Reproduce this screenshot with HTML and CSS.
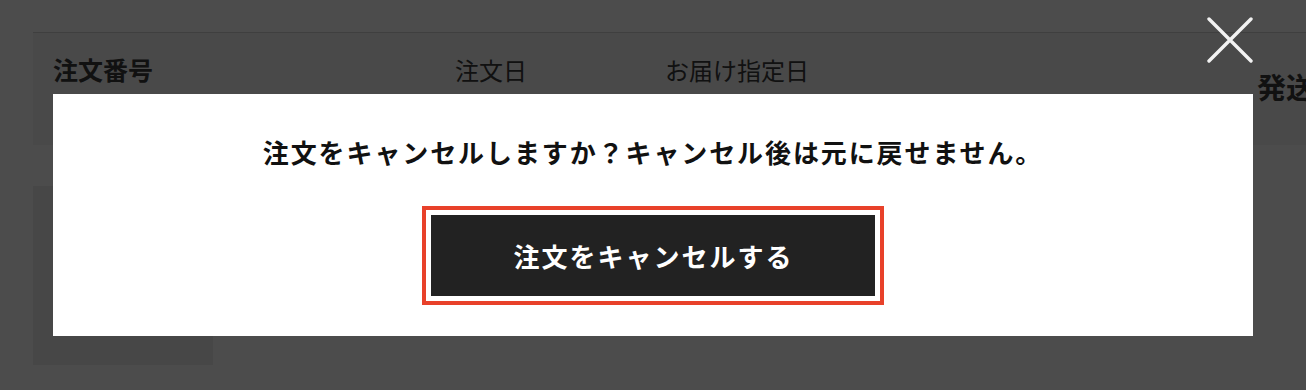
FILE: index.html
```html
<!DOCTYPE html>
<html lang="ja">
<head>
<meta charset="utf-8">
<title>注文キャンセル</title>
<link rel="stylesheet" href="styles.css">
</head>
<body>
<main class="page">
  <section class="orders">
    <div class="orders-head">
      <div class="cell cell-id">注文番号</div>
      <div class="cell cell-date">注文日</div>
      <div class="cell cell-delivery">お届け指定日</div>
      <div class="cell cell-ship">発送状況</div>
    </div>
    <div class="orders-body">
      <div class="thumb"></div>
    </div>
  </section>
</main>

<div class="overlay"></div>

<button class="close" type="button" aria-label="閉じる">
  <svg width="46" height="46" viewBox="0 0 46 46" aria-hidden="true">
    <path d="M2 2 L44 44 M44 2 L2 44" stroke="#f2f2f2" stroke-width="3.4" stroke-linecap="round" fill="none"/>
  </svg>
</button>

<div class="modal" role="dialog">
  <p class="modal-msg">注文をキャンセルしますか？キャンセル後は元に戻せません。</p>
  <button class="btn-cancel" type="button">注文をキャンセルする</button>
</div>
</body>
</html>
```

FILE: styles.css
```css
html, body {
  margin: 0;
  padding: 0;
}

body {
  width: 1306px;
  height: 390px;
  overflow: hidden;
  background: #ffffff;
  font-family: "Noto Sans CJK JP", "Noto Sans", sans-serif;
  color: #3a3a3a;
}

.page {
  padding: 32px 0 0 33px;
}

.orders {
  border-top: 1px solid #d2d2d2;
  width: 1400px;
}

.orders-head {
  display: grid;
  grid-template-columns: 402px 210px 592px 1fr;
  height: 112px;
  padding-left: 20px;
  background: #f3f3f3;
  box-sizing: border-box;
}

.cell {
  font-size: 24px;
  line-height: 1;
  white-space: nowrap;
  padding-top: 25px;
}

.cell-id {
  font-weight: 700;
  font-size: 25px;
  letter-spacing: 0;
  padding-top: 24px;
}

.cell-ship {
  font-size: 29px;
  font-weight: 700;
  padding-top: 39px;
}

.orders-body {
  padding-top: 41px;
}

.thumb {
  width: 180px;
  height: 179px;
  background: #ededed;
}

.overlay {
  position: fixed;
  inset: 0;
  background: rgba(0, 0, 0, 0.7);
}

.close {
  position: fixed;
  left: 1207px;
  top: 17px;
  width: 46px;
  height: 46px;
  padding: 0;
  border: 0;
  background: none;
  display: flex;
}

.modal {
  position: fixed;
  left: 53px;
  top: 94px;
  width: 1200px;
  height: 242px;
  background: #ffffff;
  display: flex;
  flex-direction: column;
  align-items: center;
  padding-top: 45px;
  box-sizing: border-box;
}

.modal-msg {
  margin: 0;
  font-size: 26px;
  line-height: 1;
  font-weight: 700;
  letter-spacing: 1.9px;
  color: #111111;
}

.btn-cancel {
  margin-top: 50px;
  width: 444px;
  height: 81px;
  border: 0;
  background: #222222;
  color: #ffffff;
  font-family: "Noto Sans CJK JP", "Noto Sans", sans-serif;
  font-size: 26px;
  font-weight: 700;
  letter-spacing: 2px;
  outline: 4px solid #e8412a;
  outline-offset: 5px;
  padding: 0 0 0 1px;
}
```
